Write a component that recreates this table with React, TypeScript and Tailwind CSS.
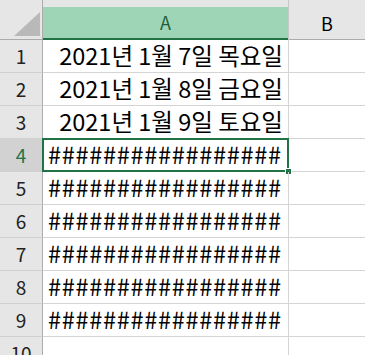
import React from "react";

const font = { fontFamily: '"Noto Sans CJK KR", "Noto Sans", sans-serif' };

const rows: { n: number; value: string; date: boolean }[] = [
  { n: 1, value: "2021년 1월 7일 목요일", date: true },
  { n: 2, value: "2021년 1월 8일 금요일", date: true },
  { n: 3, value: "2021년 1월 9일 토요일", date: true },
  { n: 4, value: "#################", date: false },
  { n: 5, value: "#################", date: false },
  { n: 6, value: "#################", date: false },
  { n: 7, value: "#################", date: false },
  { n: 8, value: "#################", date: false },
  { n: 9, value: "#################", date: false },
  { n: 10, value: "", date: false },
];

const SELECTED = 4;

const App: React.FC = () => {
  return (
    <div className="w-[365px] h-[355px] overflow-hidden bg-white" style={font}>
      <div className="grid grid-cols-[43px_246px_1fr]">
        {/* column headers */}
        <div className="relative h-[40px] bg-[#e6e6e6] border-r border-b border-[#ababab]">
          <svg className="absolute left-0 top-0" width="43" height="40">
            <polygon points="14,36 40,36 40,12" fill="#b9b9b9" />
          </svg>
        </div>
        <div className="h-[40px] bg-[#e6e6e6] pt-[7px] border-r border-[#c6c6c6]">
          <div className="h-[33px] bg-[#9fd5b7] border-b-2 border-[#217346] flex items-center justify-center text-[18px] text-[#1e5d3a]">
            A
          </div>
        </div>
        <div className="h-[40px] bg-[#e6e6e6] border-b border-[#ababab] flex items-center justify-center pt-[7px] text-[18px] text-black">
          B
        </div>

        {rows.map((r) => (
          <React.Fragment key={r.n}>
            <div
              className={`h-[33px] border-r border-b border-r-[#ababab] border-b-[#d0d0d0] flex items-center justify-center text-[19px] ${
                r.n === SELECTED ? "bg-[#d2d2d2] text-[#217346]" : "bg-[#e6e6e6] text-[#222]"
              }`}
            >
              {r.n}
            </div>
            <div
              className={`relative h-[33px] border-r border-b border-[#d4d4d4] flex items-center text-[23.5px] text-black leading-none whitespace-nowrap overflow-visible ${
                r.date ? "justify-end pr-[5px]" : "justify-start pl-[5px] tracking-[0.7px]"
              }`}
            >
              {r.value}
              {r.n === SELECTED && (
                <div className="absolute left-[-1px] top-[-1px] w-[247px] h-[34px] border-2 border-[#217346]">
                  <div className="absolute right-[-5px] bottom-[-5px] w-[7px] h-[7px] bg-[#217346] border border-white" />
                </div>
              )}
            </div>
            <div className="h-[33px] border-b border-[#d4d4d4]" />
          </React.Fragment>
        ))}
      </div>
    </div>
  );
};

export default App;
